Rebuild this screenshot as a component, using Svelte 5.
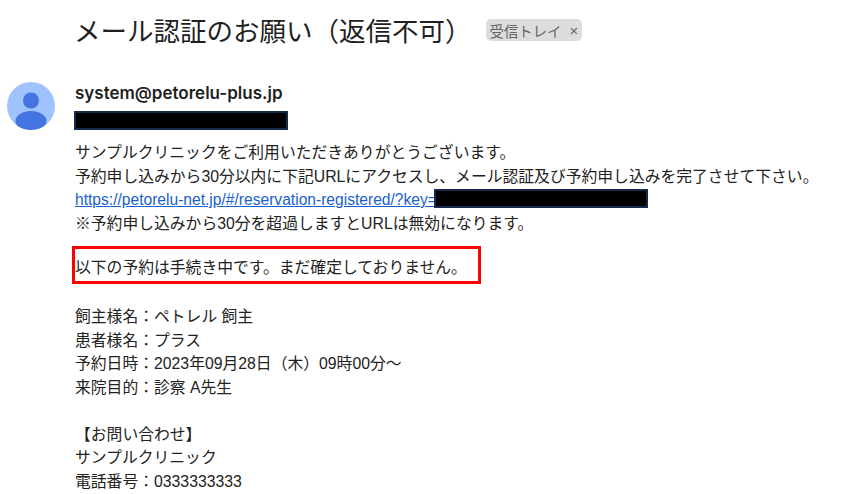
<script>
  const owner = [
    '飼主様名：ペトレル 飼主',
    '患者様名：プラス',
    '予約日時：2023年09月28日（木）09時00分～',
    '来院目的：診察 A先生'
  ];
  const contact = ['【お問い合わせ】', 'サンプルクリニック', '電話番号：0333333333'];
</script>

<main>
  <header>
    <h1>メール認証のお願い（返信不可）</h1>
    <span class="label">受信トレイ<i>×</i></span>
  </header>

  <div class="message">
    <svg class="avatar" viewBox="0 0 48 48" width="48" height="48">
      <defs>
        <clipPath id="circle"><circle cx="24" cy="24" r="24" /></clipPath>
      </defs>
      <g clip-path="url(#circle)">
        <rect width="48" height="48" fill="#a0c3ff" />
        <circle cx="24" cy="18.5" r="8" fill="#4374e0" />
        <ellipse cx="24" cy="39" rx="15.5" ry="10" fill="#4374e0" />
      </g>
    </svg>

    <div class="content">
      <div class="sender">system@petorelu-plus.jp</div>
      <div class="redact to"></div>
      <div class="body">
        <p>サンプルクリニックをご利用いただきありがとうございます。</p>
        <p>予約申し込みから30分以内に下記URLにアクセスし、メール認証及び予約申し込みを完了させて下さい。</p>
        <p class="url">
          <a href="#top">https://petorelu-net.jp/#/reservation-registered/?key=</a><span class="redact key"></span>
        </p>
        <p>※予約申し込みから30分を超過しますとURLは無効になります。</p>

        <p class="notice">以下の予約は手続き中です。まだ確定しておりません。</p>

        {#each owner as line}
          <p>{line}</p>
        {/each}

        <div class="spacer"></div>

        {#each contact as line}
          <p>{line}</p>
        {/each}
      </div>
    </div>
  </div>
</main>

<style>
  :global(body) {
    margin: 0;
    background: #fff;
  }

  main {
    width: 851px;
    height: 494px;
    overflow: hidden;
    color: #222;
    font-family: "Liberation Sans", "Noto Sans CJK JP", sans-serif;
  }

  header {
    display: flex;
    align-items: center;
    height: 62px;
    padding-left: 74px;
  }

  h1 {
    margin: -3px 0 0;
    font-size: 26.5px;
    font-weight: 400;
    color: #1f1f1f;
    white-space: nowrap;
  }

  .label {
    margin-left: 14px;
    display: flex;
    align-items: center;
    height: 22px;
    padding: 0 4px;
    border-radius: 5px;
    background: #dddddd;
    color: #666;
    font-size: 14.4px;
    margin-top: -2px;
  }

  .label i {
    margin-left: 8px;
    font-style: normal;
    font-size: 15px;
  }

  .message {
    display: flex;
    padding: 20px 0 0 7px;
  }

  .avatar {
    flex: none;
    margin-right: 20px;
  }

  .content {
    flex: 1;
  }

  .sender {
    height: 29px;
    line-height: 22px;
    font-family: Inter, "Liberation Sans", sans-serif;
    font-size: 17px;
    font-weight: 600;
    color: #1f1f1f;
  }

  .redact {
    box-sizing: border-box;
    background: #000;
    border: 2px solid #14294b;
  }

  .to {
    width: 214px;
    height: 19px;
    margin-left: -1px;
    margin-bottom: 11px;
  }

  .body {
    font-size: 15.8px;
    line-height: 23.5px;
  }

  p {
    margin: 0;
    height: 23.5px;
    white-space: nowrap;
  }

  .url {
    display: flex;
    align-items: center;
  }

  a {
    color: #1a5fd0;
    font-size: 15.6px;
    text-decoration: underline;
  }

  .key {
    width: 214px;
    height: 19px;
    margin-left: -3px;
    margin-top: -2px;
  }

  .notice {
    box-sizing: border-box;
    width: 409px;
    height: 38px;
    margin: 11px 0 21px -3px;
    border: 3px solid #f00;
    line-height: 38px;
  }

  .spacer {
    height: 23.5px;
  }
</style>
